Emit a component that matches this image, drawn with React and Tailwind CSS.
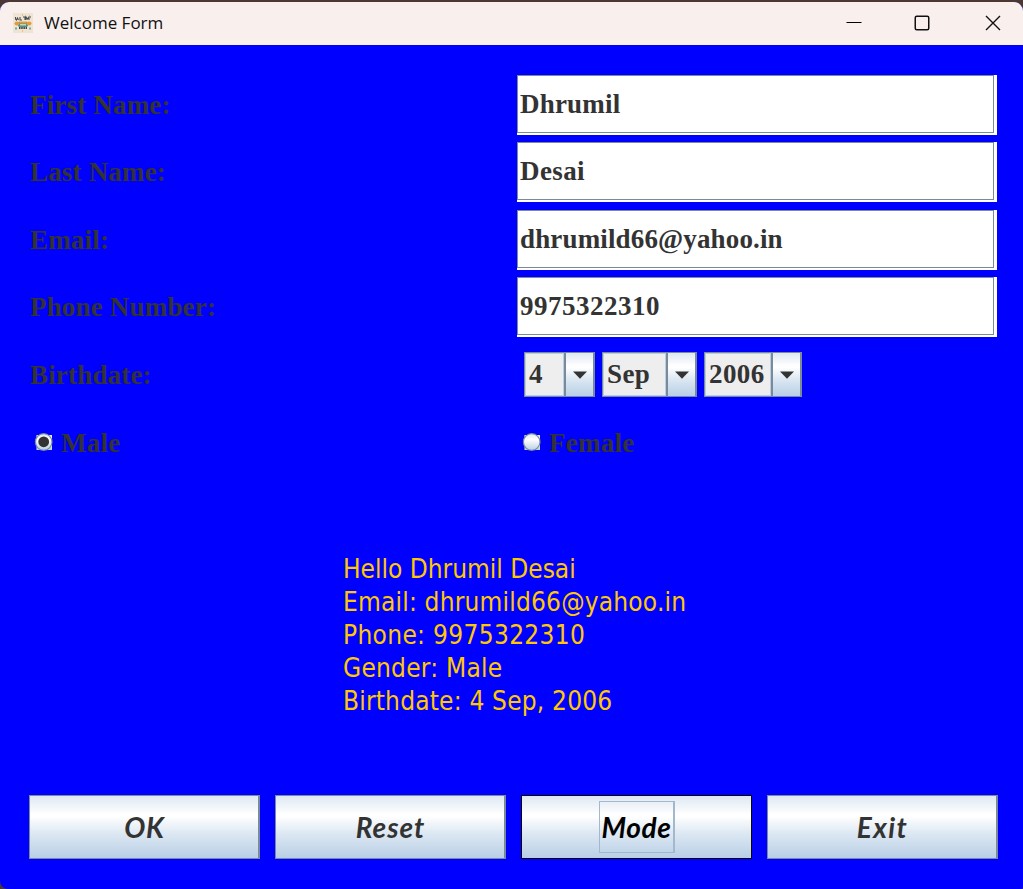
import React from "react";

const serif = "font-['Liberation_Serif',serif] font-bold text-[27px] leading-[30px] text-[#333333] whitespace-nowrap";
const steel = "bg-[linear-gradient(to_bottom,#dde8f3_0%,#ffffff_30%,#ffffff_33%,#dde8f3_60%,#b8cfe5_100%)]";

function AppIcon() {
  return (
    <svg width="20" height="20" viewBox="0 0 20 20" className="shrink-0">
      <rect width="20" height="20" fill="#efe3d3" />
      <path d="M2.500 4v2l1 1 1-2 1 2M7 4v3h2M10 4h2v3M13 7V4l1.500 2L16 4v3M17 4h1" stroke="#4a4f4f" strokeWidth="1.100" fill="none" />
      <path d="M4 9h12v2l-2 3H6l-2-3z" fill="#3f9b9b" />
      <ellipse cx="4" cy="10.500" rx="2.500" ry="2" fill="#e79a3c" />
      <ellipse cx="16" cy="10.500" rx="2.500" ry="2" fill="#e79a3c" />
      <path d="M6 8.500h8l-1 2H7z" fill="#e79a3c" />
      <rect x="7" y="11" width="6" height="1.500" fill="#d9d0a8" />
      <path d="M6 15h8" stroke="#4a4038" strokeWidth="2" strokeDasharray="1.500 0.700" />
      <path d="M9.500 1v2M9.500 17v2" stroke="#e8c477" />
      <path d="M3 14.500v2M17 14.500v2" stroke="#58aaa6" strokeWidth="1.800" />
    </svg>
  );
}

function Field({ value, tracking = "tracking-[0.2px]" }) {
  return (
    <div className="h-[60px] w-[480px] bg-white pr-[3px] pb-[2px]">
      <div className="flex h-[58px] w-[477px] items-center border border-[#7a8a99] pl-[2px]">
        <span className={`${serif} ${tracking}`}>{value}</span>
      </div>
    </div>
  );
}

function Row({ height, label, children }) {
  return (
    <div className={`flex ${height}`}>
      <div className="flex h-[60px] w-[487px] items-center">
        <span className={`${serif} tracking-[0.18px]`}>{label}</span>
      </div>
      {children}
    </div>
  );
}

function Combo({ value, width }) {
  return (
    <div className={`flex h-[45px] ${width} border border-r-2 border-[#7a8a99]`}>
      <div className="flex min-w-0 flex-1 items-center border border-[#b8cfe5] bg-[#eeeeee] pb-px pl-[3px]">
        <span className={`${serif} tracking-[0.4px]`}>{value}</span>
      </div>
      <div className={`flex w-[29px] shrink-0 items-center justify-center border-l-2 border-[#7a8a99] ${steel}`}>
        <svg width="14" height="8" viewBox="0 0 14 8">
          <path d="M0 0.500h14L7 7.800z" fill="#333333" />
        </svg>
      </div>
    </div>
  );
}

function Radio({ id, label, selected, width }) {
  return (
    <div className={`flex items-center ${width}`}>
      <svg width="20" height="20" viewBox="0 0 20 20" className="mb-[2px] shrink-0">
        <defs>
          <linearGradient id={id} x1="0" y1="0" x2="0" y2="1">
            <stop offset="0" stopColor="#dde8f3" />
            <stop offset="0.350" stopColor="#ffffff" />
            <stop offset="1" stopColor="#b8cfe5" />
          </linearGradient>
        </defs>
        <rect x="2.500" y="3" width="15.500" height="15" fill={`url(#${id})`} />
        <circle cx="9.700" cy="10" r="8.300" fill={`url(#${id})`} stroke="#7a8a99" strokeWidth="1.200" />
        {selected && <circle cx="9.700" cy="9.800" r="5.400" fill="#333333" />}
      </svg>
      <span className={`${serif} ml-[7px] tracking-[0.25px]`}>{label}</span>
    </div>
  );
}

const buttonText = "font-['Lato',sans-serif] italic font-bold text-[28px] leading-[36px]";

function Button({ label, tracking }) {
  return (
    <button className={`flex h-[64px] w-[231px] items-center justify-center border border-r-2 border-[#7a8a99] text-[#333333] ${steel}`}>
      <span className={`${buttonText} ${tracking} pl-px`}>{label}</span>
    </button>
  );
}

export default function App() {
  return (
    <div className="h-[889px] w-[1023px] overflow-hidden bg-[#4b3835] pt-[2px]">
      <div className="flex h-[887px] flex-col overflow-hidden rounded-t-[9px] rounded-bl-[8px] rounded-br-[2px] bg-[#0000ff]">
        <header className="flex h-[43px] shrink-0 items-center bg-[#f9f0ee] pb-[2px] pl-[13px]">
          <AppIcon />
          <span className="ml-[11px] font-['Open_Sans',sans-serif] text-[17px] leading-[24px] text-[#111111]">Welcome Form</span>
          <div className="ml-auto flex items-center pr-[22px]">
            <svg width="16" height="16" viewBox="0 0 16 16" className="mr-[52px]">
              <path d="M0.500 7.500h15" stroke="#000" />
            </svg>
            <svg width="16" height="16" viewBox="0 0 16 16" className="mr-[55px]">
              <rect x="1.250" y="1.250" width="13.500" height="13.500" rx="1.500" fill="none" stroke="#111" strokeWidth="1.500" />
            </svg>
            <svg width="16" height="16" viewBox="0 0 16 16">
              <path d="M1 1l14 14M15 1L1 15" stroke="#111" strokeWidth="1.400" />
            </svg>
          </div>
        </header>

        <main className="pt-[30px] pl-[30px]">
          <Row height="h-[67px]" label="First Name:"><Field value="Dhrumil" /></Row>
          <Row height="h-[68px]" label="Last Name:"><Field value="Desai" tracking="tracking-[0.4px]" /></Row>
          <Row height="h-[67px]" label="Email:"><Field value="dhrumild66@yahoo.in" tracking="tracking-[0.15px]" /></Row>
          <Row height="h-[68px]" label="Phone Number:"><Field value="9975322310" tracking="tracking-[0.5px]" /></Row>
          <Row height="h-[67px]" label="Birthdate:">
            <div className="flex gap-[7px] pt-[7px] pl-[7px]">
              <Combo value="4" width="w-[71px]" />
              <Combo value="Sep" width="w-[95px]" />
              <Combo value="2006" width="w-[98px]" />
            </div>
          </Row>
          <div className="flex h-[61px] pl-[4px]">
            <Radio id="male-fill" label="Male" selected width="w-[488px]" />
            <Radio id="female-fill" label="Female" width="w-[200px]" />
          </div>
        </main>

        <section className="mt-[80px] pl-[343px] font-['DejaVu_Sans_Condensed','DejaVu_Sans',sans-serif] text-[26px] leading-[33px] whitespace-nowrap text-[#ffc800]">
          <p>Hello Dhrumil Desai</p>
          <p className="tracking-[0.2px]">Email: dhrumild66@yahoo.in</p>
          <p className="tracking-[0.33px]">Phone: 9975322310</p>
          <p className="tracking-[0.25px]">Gender: Male</p>
          <p className="tracking-[0.2px]">Birthdate: 4 Sep, 2006</p>
        </section>

        <footer className="mt-[77px] flex gap-[15px] pl-[29px]">
          <Button label="OK" tracking="tracking-[0.8px]" />
          <Button label="Reset" tracking="tracking-[1px]" />
          <button className={`flex h-[64px] w-[231px] items-center justify-center border border-black text-black ${steel}`}>
            <span className={`flex h-[52px] w-[76px] items-center justify-center border border-r-2 border-[#a3b8cc] pl-px tracking-[0.6px] ${buttonText}`}>Mode</span>
          </button>
          <Button label="Exit" tracking="tracking-[1.4px]" />
        </footer>
      </div>
    </div>
  );
}
